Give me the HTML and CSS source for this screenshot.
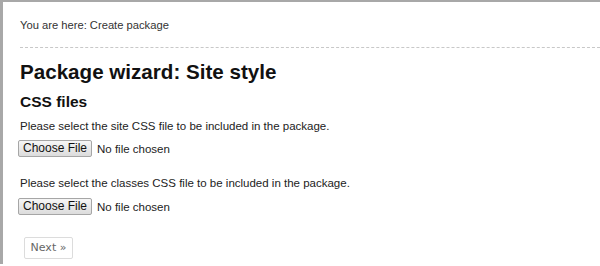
FILE: index.html
```html
<!DOCTYPE html>
<html>
<head>
<meta charset="utf-8">
<link rel="stylesheet" href="styles.css">
</head>
<body>
<div class="frame">
  <div class="crumb">You are here: Create package</div>
  <h1 class="title">Package wizard: Site style</h1>
  <h2 class="subtitle">CSS files</h2>
  <p class="label">Please select the site CSS file to be included in the package.</p>
  <div class="file"><span class="file-btn">Choose File</span><span class="file-name">No file chosen</span></div>
  <p class="label second">Please select the classes CSS file to be included in the package.</p>
  <div class="file"><span class="file-btn">Choose File</span><span class="file-name">No file chosen</span></div>
  <div class="actions"><span class="next">Next &raquo;</span></div>
</div>
</body>
</html>
```

FILE: styles.css
```css
html, body {
  margin: 0;
  padding: 0;
  background: #ffffff;
}
body {
  width: 600px;
  height: 266px;
  overflow: hidden;
  font-family: "Liberation Sans", Arial, sans-serif;
  color: #222;
}
.frame {
  border-top: 2px solid #a8a8a8;
  border-left: 3px solid #a8a8a8;
  height: 264px;
  box-sizing: border-box;
  padding: 16px 0 0 17px;
}
.crumb {
  font-size: 11.2px;
  color: #333;
  line-height: 14px;
  padding-bottom: 15px;
  border-bottom: 1px dashed #c8c8c8;
}
.title {
  margin: 12px 0 0 0;
  font-size: 20.6px;
  line-height: 24px;
  font-weight: bold;
  color: #111;
}
.subtitle {
  margin: 8px 0 0 0;
  font-size: 15.5px;
  line-height: 20px;
  font-weight: bold;
  color: #111;
}
.label {
  margin: 7px 0 0 0;
  font-size: 11.5px;
  line-height: 14px;
  color: #222;
}
.label.second {
  margin-top: 19px;
}
.file {
  display: flex;
  align-items: center;
  margin-top: 7px;
  font-size: 11.5px;
}
.label.second + .file {
  margin-top: 8px;
}
.file-btn {
  display: inline-block;
  box-sizing: border-box;
  width: 74px;
  height: 17px;
  line-height: 15px;
  text-align: center;
  border: 1px solid #a6a6a6;
  border-radius: 2px;
  background: linear-gradient(#f6f6f6, #dcdcdc);
  color: #111;
  font-size: 12px;
  margin-left: -2px;
}
.file-name {
  margin-left: 5px;
  color: #222;
}
.actions {
  margin-top: 22px;
  padding-left: 4px;
}
.next {
  display: inline-block;
  box-sizing: border-box;
  width: 49px;
  height: 22px;
  line-height: 20px;
  text-align: center;
  border: 1px solid #dcdcdc;
  border-radius: 2px;
  font-family: "DejaVu Sans", Verdana, sans-serif;
  font-size: 11px;
  color: #666;
  background: #fff;
}
```
